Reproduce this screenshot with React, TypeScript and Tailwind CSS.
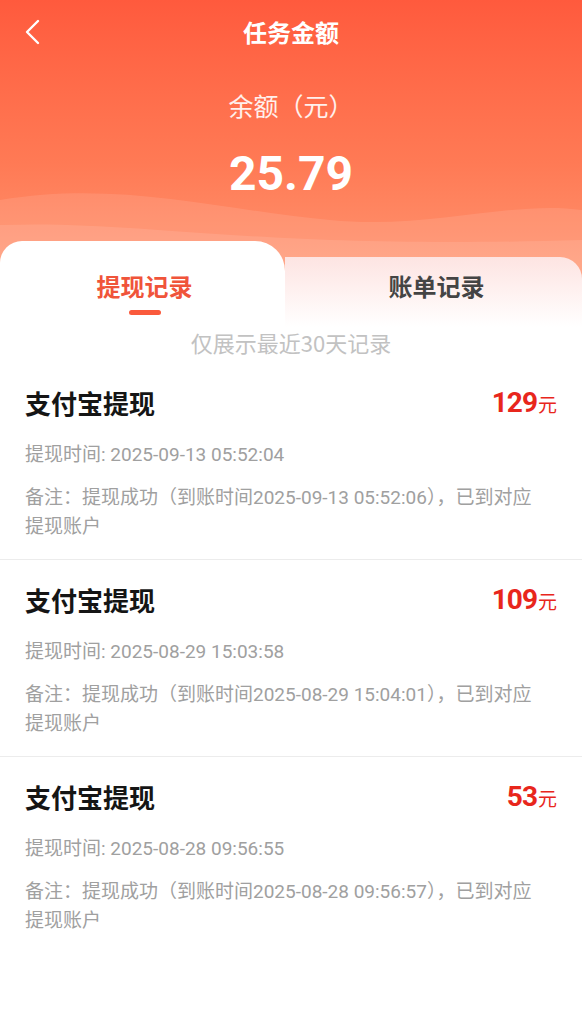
import React from 'react';

interface Record {
    amount: string;
    time: string;
    arrive: string;
}

const records: Record[] = [
    { amount: '129', time: '2025-09-13 05:52:04', arrive: '2025-09-13 05:52:06' },
    { amount: '109', time: '2025-08-29 15:03:58', arrive: '2025-08-29 15:04:01' },
    { amount: '53', time: '2025-08-28 09:56:55', arrive: '2025-08-28 09:56:57' },
];

export default function App() {
    return (
        <div className="min-h-screen w-full bg-white font-['Noto_Sans_CJK_SC','Noto_Sans',sans-serif]">
            {/* Header */}
            <div className="relative overflow-hidden bg-gradient-to-b from-[#ff5a3d] via-[#ff7a55] to-[#ffa07c]">
                <svg className="absolute left-0 top-[180px] h-[150px] w-full" viewBox="0 0 582 150" preserveAspectRatio="none">
                    <path d="M0 20 C120 0 220 30 330 40 C430 50 510 20 582 30 L582 150 L0 150 Z" fill="#ffffff" fillOpacity="0.1" />
                    <path d="M0 45 C150 40 250 70 582 60 L582 150 L0 150 Z" fill="#ffffff" fillOpacity="0.1" />
                </svg>

                <div className="relative">
                    {/* Nav */}
                    <div className="relative flex h-[64px] items-center justify-center">
                        <svg className="absolute left-[22px] top-[18px]" width="22" height="28" viewBox="0 0 22 28" fill="none">
                            <polyline points="16,3 5,14 16,25" stroke="#ffffff" strokeWidth="2.4" strokeLinecap="round" strokeLinejoin="round" />
                        </svg>
                        <h1 className="text-[24px] font-bold text-white">任务金额</h1>
                    </div>

                    {/* Balance */}
                    <div className="mt-[26px] text-center text-[25px] leading-[30px] text-white/90">余额（元）</div>
                    <div className="mt-[24px] text-center font-['Roboto',sans-serif] text-[48px] font-bold leading-[60px] text-white">
                        25.79
                    </div>

                    {/* Tabs */}
                    <div className="mt-[37px] flex h-[86px] items-start">
                        <div className="flex h-full w-[285px] flex-col items-center rounded-tl-[22px] rounded-tr-[30px] bg-white pt-[28px] pl-[4px]">
                            <span className="text-[24px] font-bold leading-[34px] text-[#f0543a]">提现记录</span>
                            <span className="mt-[7px] h-[5px] w-[32px] rounded-full bg-[#fa5a3c]" />
                        </div>
                        <div className="flex h-[70px] flex-1 self-end justify-center rounded-tr-[22px] bg-gradient-to-b from-[#fde4e2] to-white pt-[12px] pl-[6px]">
                            <span className="text-[24px] font-bold leading-[34px] text-[#444444]">账单记录</span>
                        </div>
                    </div>
                </div>
            </div>

            {/* Body */}
            <div className="text-center text-[22px] leading-[30px] text-[#c2c2c2]">仅展示最近30天记录</div>

            <div className="mt-[6px]">
                {records.map((r, i) => (
                    <div
                        key={i}
                        className={`px-[25px] pb-[18px] pt-[23px] ${i < records.length - 1 ? 'border-b border-[#ececec]' : ''}`}
                    >
                        <div className="flex items-center justify-between">
                            <span className="text-[26px] font-bold leading-[34px] text-[#151515]">支付宝提现</span>
                            <span className="flex items-baseline text-[#e8261c]">
                                <span className="font-['Roboto',sans-serif] text-[28px] font-bold leading-[34px] tracking-[-1px]">{r.amount}</span>
                                <span className="ml-[1px] text-[19px]">元</span>
                            </span>
                        </div>
                        <div className="mt-[21px] font-['Roboto','Noto_Sans_CJK_SC',sans-serif] text-[19px] leading-[28px] text-[#a0a0a0]">
                            提现时间: {r.time}
                        </div>
                        <div className="mt-[14px] font-['Roboto','Noto_Sans_CJK_SC',sans-serif] text-[19px] leading-[29px] text-[#a0a0a0]">
                            <span className="block">备注：提现成功（到账时间{r.arrive}），已到对应</span>
                            <span className="block">提现账户</span>
                        </div>
                    </div>
                ))}
            </div>
        </div>
    );
}
